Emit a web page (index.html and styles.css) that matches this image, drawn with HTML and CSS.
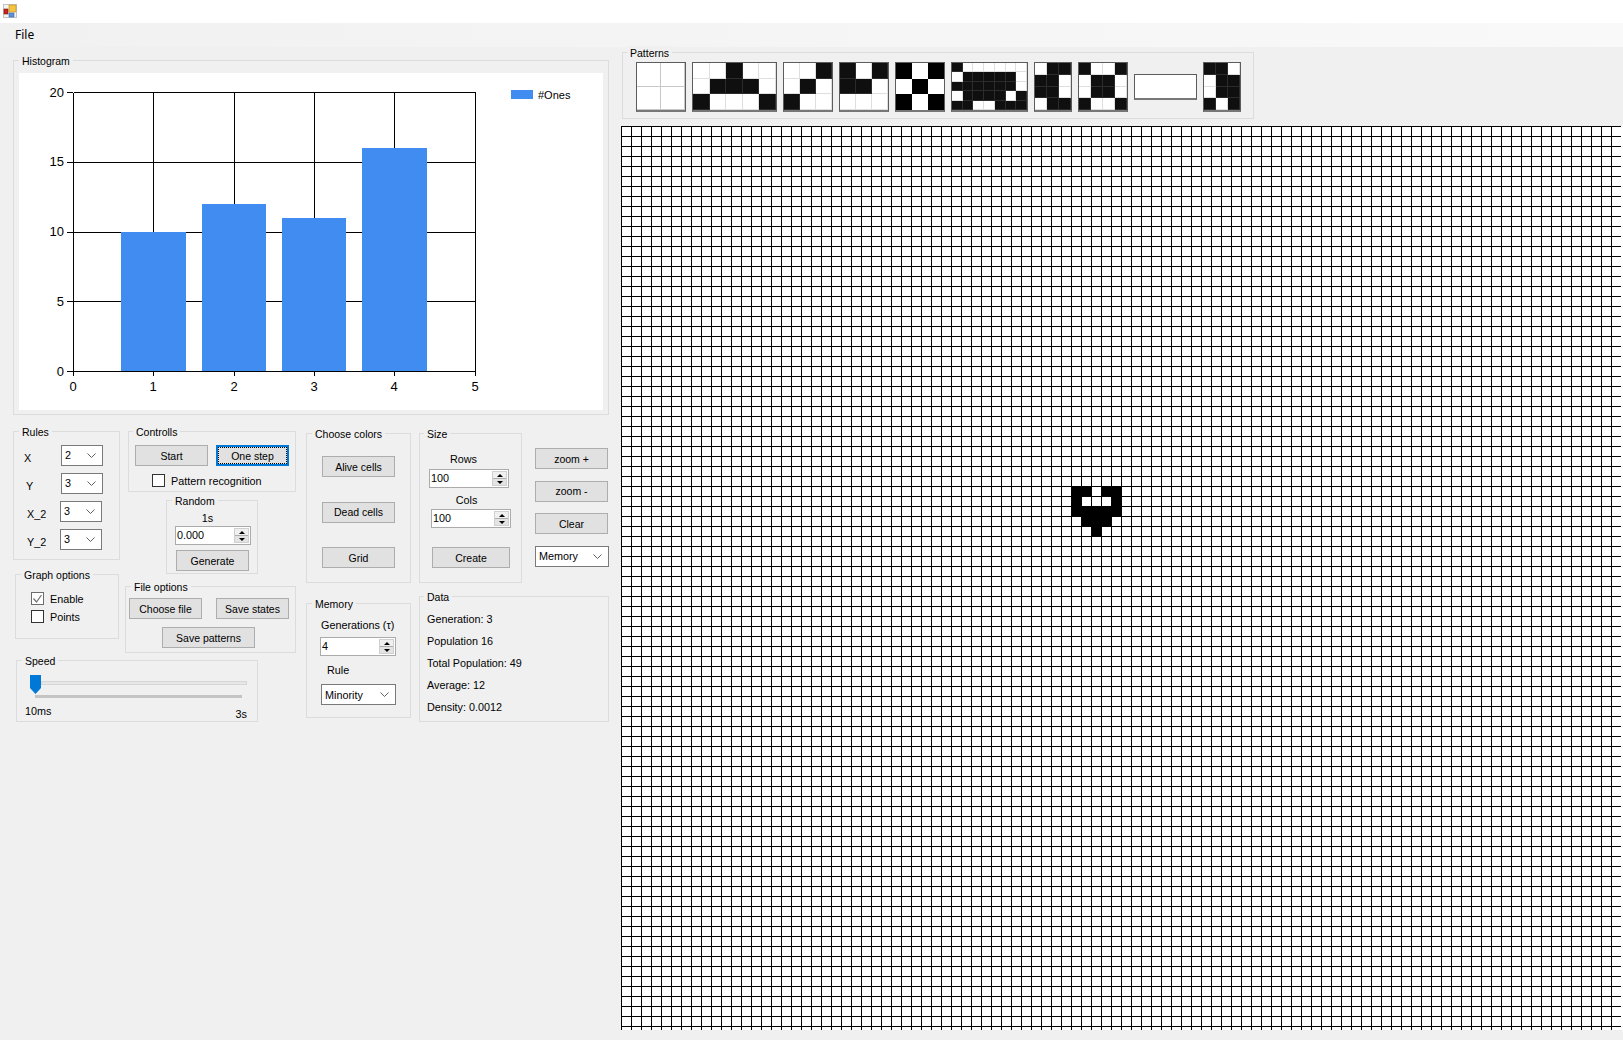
FILE: index.html
```html
<!DOCTYPE html>
<html lang="en">
<head>
<meta charset="utf-8">
<title>Game of Life</title>
<link rel="stylesheet" href="styles.css">
</head>
<body>
<header class="titlebar">
  <svg class="app-icon" width="14" height="14" viewBox="0 0 14 14">
    <rect x="0" y="0" width="14" height="14" fill="#c4c4c4"/>
    <rect x="1" y="1" width="12" height="12" fill="#f4f4f4"/>
    <rect x="6" y="1" width="7" height="7" fill="#f5c542" stroke="#b98a1a" stroke-width=".6"/>
    <rect x="1" y="5" width="4" height="5" fill="#c8231c" stroke="#7c1410" stroke-width=".6"/>
    <rect x="6" y="9" width="5" height="4" fill="#5d8fdc" stroke="#3c68ac" stroke-width=".6"/>
  </svg>
</header>
<nav class="menubar"><span class="menu-item">File</span></nav>

<main class="app">
  <section class="left">
    <div class="group histogram">
      <div class="legend">Histogram</div>
      <svg class="chart" width="584" height="337" viewBox="0 0 584 337">
        <g class="grid-lines">
          <path d="M54.5 19.5H456.5M54.5 89.5H456.5M54.5 159.5H456.5M54.5 228.5H456.5M54.5 298.5H456.5"/>
          <path d="M54.5 19.5V298.5M134.5 19.5V298.5M215.5 19.5V298.5M295.5 19.5V298.5M375.5 19.5V298.5M456.5 19.5V298.5"/>
          <path d="M48 19.5H54M48 89.5H54M48 159.5H54M48 228.5H54M48 298.5H54"/>
          <path d="M54.5 298V303M134.5 298V303M215.5 298V303M295.5 298V303M375.5 298V303M456.5 298V303"/>
        </g>
        <g class="bars">
          <rect x="102" y="159" width="65" height="139"/>
          <rect x="183" y="131" width="64" height="167"/>
          <rect x="263" y="145" width="64" height="153"/>
          <rect x="343" y="75" width="65" height="223"/>
          <rect x="492" y="17" width="22" height="9"/>
        </g>
        <g class="y-labels">
          <text x="45" y="24">20</text>
          <text x="45" y="93">15</text>
          <text x="45" y="163">10</text>
          <text x="45" y="233">5</text>
          <text x="45" y="303">0</text>
        </g>
        <g class="x-labels">
          <text x="54" y="318">0</text>
          <text x="134" y="318">1</text>
          <text x="215" y="318">2</text>
          <text x="295" y="318">3</text>
          <text x="375" y="318">4</text>
          <text x="456" y="318">5</text>
        </g>
        <text class="chart-legend" x="519" y="26">#Ones</text>
      </svg>
    </div>

    <div class="controls">
      <div class="col-ab">
        <div class="ab-row">
          <div class="col-a">
            <div class="group rules">
              <div class="legend">Rules</div>
              <div class="rule-list">
                <div class="rule-row"><span class="rule-label rl-x">X</span><div class="combo combo-small"><span>2</span><svg class="chev" width="9" height="5" viewBox="0 0 9 5"><path d="M.5.5l4 4 4-4"/></svg></div></div>
                <div class="rule-row"><span class="rule-label rl-y">Y</span><div class="combo combo-small"><span>3</span><svg class="chev" width="9" height="5" viewBox="0 0 9 5"><path d="M.5.5l4 4 4-4"/></svg></div></div>
                <div class="rule-row"><span class="rule-label rl-x2">X_2</span><div class="combo combo-small"><span>3</span><svg class="chev" width="9" height="5" viewBox="0 0 9 5"><path d="M.5.5l4 4 4-4"/></svg></div></div>
                <div class="rule-row"><span class="rule-label rl-x2">Y_2</span><div class="combo combo-small"><span>3</span><svg class="chev" width="9" height="5" viewBox="0 0 9 5"><path d="M.5.5l4 4 4-4"/></svg></div></div>
              </div>
            </div>
            <div class="group graph">
              <div class="legend">Graph options</div>
              <div class="check-list">
                <label class="check"><span class="box box-on"><svg width="11" height="11" viewBox="0 0 11 11"><path d="M1.5 5.5l3 3.5 5-7"/></svg></span>Enable</label>
                <label class="check"><span class="box"></span>Points</label>
              </div>
            </div>
          </div>
          <div class="col-b">
            <div class="group controlls">
              <div class="legend legend-tight">Controlls</div>
              <div class="btn-row btn-row-ctrl">
                <button class="btn">Start</button>
                <button class="btn btn-focus">One step</button>
              </div>
              <label class="check check-pattern"><span class="box"></span>Pattern recognition</label>
            </div>
            <div class="group random">
              <div class="legend">Random</div>
              <div class="random-time">1s</div>
              <div class="numeric numeric-random"><span class="num-value">0.000</span><span class="spin"><b class="up"></b><b class="down"></b></span></div>
              <button class="btn btn-generate">Generate</button>
            </div>
            <div class="group file">
              <div class="legend">File options</div>
              <div class="btn-row btn-row-file">
                <button class="btn">Choose file</button>
                <button class="btn">Save states</button>
              </div>
              <button class="btn btn-save">Save patterns</button>
            </div>
          </div>
        </div>
        <div class="group speed">
          <div class="legend">Speed</div>
          <div class="slider">
            <div class="slider-track"></div>
            <svg class="slider-thumb" width="11" height="19" viewBox="0 0 11 19"><path d="M0 0H11V13L5.5 19 0 13Z"/></svg>
          </div>
          <div class="slider-ticks"></div>
          <div class="slider-labels"><span>10ms</span><span class="label-3s">3s</span></div>
        </div>
      </div>

      <div class="col-c">
        <div class="group colors">
          <div class="legend">Choose colors</div>
          <div class="color-btns">
            <button class="btn">Alive cells</button>
            <button class="btn">Dead cells</button>
            <button class="btn">Grid</button>
          </div>
        </div>
        <div class="group memory">
          <div class="legend">Memory</div>
          <div class="mem-gen">Generations (τ)</div>
          <div class="numeric numeric-mem"><span class="num-value">4</span><span class="spin"><b class="up"></b><b class="down"></b></span></div>
          <div class="mem-rule">Rule</div>
          <div class="combo combo-rule"><span>Minority</span><svg class="chev" width="9" height="5" viewBox="0 0 9 5"><path d="M.5.5l4 4 4-4"/></svg></div>
        </div>
      </div>

      <div class="col-d">
        <div class="d-row">
          <div class="group size">
            <div class="legend legend-tight">Size</div>
            <div class="size-label size-rows">Rows</div>
            <div class="numeric numeric-rows"><span class="num-value">100</span><span class="spin"><b class="up"></b><b class="down"></b></span></div>
            <div class="size-label size-cols">Cols</div>
            <div class="numeric numeric-cols"><span class="num-value">100</span><span class="spin"><b class="up"></b><b class="down"></b></span></div>
            <button class="btn btn-create">Create</button>
          </div>
          <div class="side-btns">
            <button class="btn">zoom +</button>
            <button class="btn">zoom -</button>
            <button class="btn">Clear</button>
            <div class="combo combo-memory"><span>Memory</span><svg class="chev" width="9" height="5" viewBox="0 0 9 5"><path d="M.5.5l4 4 4-4"/></svg></div>
          </div>
        </div>
        <div class="group data">
          <div class="legend legend-tight">Data</div>
          <ul class="data-list">
            <li>Generation: 3</li>
            <li>Population 16</li>
            <li>Total Population: 49</li>
            <li>Average: 12</li>
            <li>Density: 0.0012</li>
          </ul>
        </div>
      </div>
    </div>
  </section>

  <section class="right">
    <div class="group patterns">
      <div class="legend legend-tight">Patterns</div>
      <div class="tiles">
        <div class="tile t1 c2"><i></i><i></i><i></i><i></i></div>
        <div class="tile t2 c5"><i></i><i></i><i class="k"></i><i></i><i></i><i></i><i class="k"></i><i class="k"></i><i class="k"></i><i></i><i class="k"></i><i></i><i></i><i></i><i class="k"></i></div>
        <div class="tile t3 c3"><i></i><i></i><i class="k"></i><i></i><i class="k"></i><i></i><i class="k"></i><i></i><i></i></div>
        <div class="tile t3 c3"><i class="k"></i><i></i><i class="k"></i><i class="k"></i><i class="k"></i><i></i><i></i><i></i><i></i></div>
        <div class="tile t3 c3 pure"><i class="k"></i><i></i><i class="k"></i><i></i><i class="k"></i><i></i><i class="k"></i><i></i><i class="k"></i></div>
        <div class="tile t6 c7"><i class="k"></i><i></i><i></i><i></i><i></i><i></i><i></i><i></i><i class="k"></i><i class="k"></i><i class="k"></i><i class="k"></i><i class="k"></i><i></i><i class="k"></i><i class="k"></i><i class="k"></i><i class="k"></i><i class="k"></i><i class="k"></i><i></i><i></i><i class="k"></i><i class="k"></i><i class="k"></i><i class="k"></i><i></i><i class="k"></i><i class="k"></i><i class="k"></i><i></i><i></i><i class="k"></i><i class="k"></i><i class="k"></i></div>
        <div class="tile t7 c3"><i></i><i class="k"></i><i class="k"></i><i class="k"></i><i class="k"></i><i></i><i class="k"></i><i class="k"></i><i></i><i></i><i class="k"></i><i class="k"></i></div>
        <div class="tile t3 c4"><i class="k"></i><i></i><i></i><i class="k"></i><i></i><i class="k"></i><i class="k"></i><i></i><i></i><i class="k"></i><i class="k"></i><i></i><i class="k"></i><i></i><i></i><i class="k"></i></div>
        <div class="tile t9"></div>
        <div class="tile t7 c3"><i class="k"></i><i class="k"></i><i></i><i></i><i class="k"></i><i class="k"></i><i></i><i class="k"></i><i class="k"></i><i class="k"></i><i></i><i class="k"></i></div>
      </div>
    </div>
    <div class="board">
      <svg class="board-svg" width="1000" height="904" viewBox="0 0 1000 904">
        <defs>
          <pattern id="cell" width="10" height="10" patternUnits="userSpaceOnUse">
            <rect width="10" height="1"/>
            <rect width="1" height="10"/>
          </pattern>
        </defs>
        <rect width="1000" height="904" fill="url(#cell)"/>
        <rect x="450" y="360" width="21" height="10"/>
        <rect x="480" y="360" width="21" height="10"/>
        <rect x="450" y="370" width="11" height="10"/>
        <rect x="490" y="370" width="11" height="10"/>
        <rect x="450" y="380" width="51" height="10"/>
        <rect x="460" y="390" width="31" height="10"/>
        <rect x="470" y="400" width="11" height="11"/>
      </svg>
    </div>
  </section>
</main>
</body>
</html>
```

FILE: styles.css
```css
* { box-sizing: border-box; }
html, body { margin: 0; height: 100%; }
body {
  width: 1623px;
  height: 1040px;
  overflow: hidden;
  background: #f0f0f0;
  color: #000;
  font-family: "Liberation Sans", Arial, sans-serif;
  font-size: 10.8px;
  line-height: 14px;
}

/* window chrome */
.titlebar { height: 23px; background: #fff; padding: 4px 0 0 3px; }
.app-icon { display: block; }
.menubar {
  height: 24px;
  padding: 4px 0 0 15px;
  background: linear-gradient(90deg, #f1f1f1, #f9f9f9);
  font-family: "Noto Sans", sans-serif;
  font-size: 12px;
  line-height: 16px;
}

.app { display: flex; height: 993px; }
.left { width: 621px; flex: none; padding: 13px 0 0 13px; }
.right { flex: 1; min-width: 0; padding-top: 5px; }

/* group boxes */
.group { border: 1px solid #dcdcdc; }
.legend {
  display: table;
  height: 14px;
  margin: -7px 0 0 5px;
  padding: 0 3px;
  background: #f0f0f0;
  font-size: 10.5px;
  white-space: nowrap;
}
.legend-tight { margin-left: 4px; }

/* buttons */
.btn {
  display: block;
  width: 73px;
  height: 21px;
  padding: 0;
  border: 1px solid #adadad;
  border-radius: 0;
  background: #e1e1e1;
  color: #000;
  font: inherit;
  font-size: 10.5px;
  text-align: center;
}
.btn-focus { border: 2px solid #0078d7; outline: 1px dotted #000; outline-offset: -3px; }

/* combos */
.combo {
  display: flex;
  align-items: center;
  justify-content: space-between;
  height: 21px;
  padding: 0 6px 0 3px;
  border: 1px solid #7a7a7a;
  background: #fff;
}
.chev { display: block; fill: none; stroke: #606060; stroke-width: 1; }
.combo-small { width: 42px; }
.combo-small span { padding-bottom: 2px; }
.combo-memory { width: 74px; }
.combo-rule { width: 75px; margin: 7px 0 0 14px; }

/* numeric up-down */
.numeric {
  display: flex;
  justify-content: space-between;
  height: 19px;
  width: 76px;
  border: 1px solid #ababab;
  background: #fff;
}
.num-value { padding: 1px 0 0 1px; }
.spin {
  display: flex;
  flex-direction: column;
  width: 15px;
  margin: 1px;
  border: 1px solid #d0d0d0;
}
.spin b {
  flex: 1;
  display: flex;
  align-items: center;
  justify-content: center;
}
.spin .up { background: #f0f0f0; border-bottom: 1px solid #adadad; }
.spin .down { background: #e3e3e3; }
.spin b::after {
  content: "";
  border-left: 3px solid transparent;
  border-right: 3px solid transparent;
}
.spin .up::after { border-bottom: 3px solid #000; }
.spin .down::after { border-top: 3px solid #000; }

/* checkboxes */
.check { display: flex; align-items: center; height: 13px; }
.box {
  flex: none;
  width: 13px;
  height: 13px;
  margin-right: 6px;
  border: 1px solid #333;
  background: #fff;
}
.box svg { display: block; fill: none; stroke: #707070; stroke-width: 1.2; }
.box-on { border-color: #6d6d6d; }

/* histogram */
.histogram { width: 596px; height: 355px; }
.chart { display: block; margin: 5px 0 0 5px; background: #fff; }
.grid-lines path { fill: none; stroke: #000; stroke-width: 1; shape-rendering: crispEdges; }
.bars rect { fill: #418cf0; shape-rendering: crispEdges; }
.y-labels text, .x-labels text { font-size: 13px; }
.y-labels { text-anchor: end; }
.x-labels { text-anchor: middle; }
.chart-legend { font-size: 11px; }

/* lower control area */
.controls { display: flex; margin-top: 16px; }
.col-ab { width: 283px; flex: none; }
.ab-row { display: flex; }
.col-a { width: 107px; flex: none; }
.col-b { margin-left: 8px; }
.col-c { width: 105px; flex: none; margin: 2px 0 0 10px; }
.col-d { width: 190px; flex: none; margin: 2px 0 0 8px; }
.d-row { display: flex; }

.rules { width: 107px; height: 129px; }
.rule-list { display: flex; flex-direction: column; gap: 7px; margin-top: 6px; }
.rule-row { display: flex; }
.rule-label { padding-top: 6px; }
.rl-x { width: 37px; margin-left: 10px; }
.rl-y { width: 35px; margin-left: 12px; }
.rl-x2 { width: 33px; margin-left: 13px; }

.graph { width: 104px; height: 65px; margin: 14px 0 0 2px; }
.check-list { display: flex; flex-direction: column; gap: 5px; margin: 10px 0 0 15px; }

.controlls { width: 168px; height: 61px; }
.btn-row { display: flex; }
.btn-row-ctrl { gap: 8px; margin: 6px 0 0 6px; }
.check-pattern { margin: 8px 0 0 23px; }

.random { width: 92px; height: 74px; margin: 8px 0 0 38px; }
.random-time { width: 81px; margin-top: 3px; text-align: center; }
.numeric-random { margin: 1px 0 0 8px; }
.btn-generate { margin: 5px 0 0 9px; }

.file { width: 171px; height: 67px; margin: 12px 0 0 -3px; }
.btn-row-file { gap: 14px; margin: 4px 0 0 3px; }
.btn-save { width: 93px; margin: 8px 0 0 36px; }

.speed { width: 242px; height: 62px; margin: 7px 0 0 3px; }
.slider { position: relative; height: 19px; margin: 7px 0 0 13px; }
.slider-track {
  position: absolute;
  left: 11px;
  top: 6px;
  width: 206px;
  height: 4px;
  border: 1px solid #d6d6d6;
  background: #e7e7e7;
}
.slider-thumb { position: absolute; left: 0; top: 0; fill: #0078d7; }
.slider-ticks { width: 207px; height: 3px; margin: 1px 0 0 18px; background: #c4c4c4; }
.slider-labels { display: flex; justify-content: space-between; margin-top: 6px; padding: 0 10px 0 8px; }
.label-3s { padding-top: 3px; }

.colors { height: 150px; }
.color-btns { display: flex; flex-direction: column; gap: 24.5px; margin: 15px 0 0 15px; }

.memory { height: 115px; margin-top: 20px; }
.mem-gen { margin: 7px 0 0 14px; }
.numeric-mem { margin: 5px 0 0 13px; }
.mem-rule { margin: 7px 0 0 20px; }

.size { width: 103px; height: 150px; flex: none; }
.size-label { width: 87px; text-align: center; }
.size-rows { margin-top: 11px; }
.numeric-rows { width: 80px; margin: 3px 0 0 9px; }
.size-cols { margin: 5px 0 0 3px; }
.numeric-cols { width: 80px; margin: 2px 0 0 11px; }
.btn-create { width: 78px; margin: 19px 0 0 12px; }

.side-btns { display: flex; flex-direction: column; gap: 11.6px; margin: 15px 0 0 13px; }

.data { width: 190px; height: 126px; margin-top: 13px; }
.data-list { display: flex; flex-direction: column; gap: 8px; margin: 8px 0 0 7px; padding: 0; list-style: none; }

/* patterns strip */
.patterns { width: 632px; height: 67px; margin-left: 1px; }
.tiles { display: flex; align-items: center; gap: 6px; height: 50px; margin: 2px 0 0 13px; }
.tile {
  display: grid;
  grid-auto-rows: 1fr;
  flex: none;
  height: 50px;
  border: 1px solid #5c5c5c;
  border-bottom: 2px solid #777;
  background: #fff;
}
.c2 { grid-template-columns: repeat(2, 1fr); }
.c3 { grid-template-columns: repeat(3, 1fr); }
.c4 { grid-template-columns: repeat(4, 1fr); }
.c5 { grid-template-columns: repeat(5, 1fr); }
.c7 { grid-template-columns: repeat(7, 1fr); }
.tile i {
  display: block;
  border-right: 1px solid rgba(128, 128, 128, .25);
  border-bottom: 1px solid rgba(128, 128, 128, .25);
}
.tile i.k { background: #0f0f0f; }
.t1 { width: 50px; }
.t1 i { border-color: #c8c8c8; }
.t2 { width: 85px; }
.t3 { width: 50px; }
.t6 { width: 77px; }
.t7 { width: 38px; }
.t9 { width: 63px; height: 26px; }
.pure i { border-color: transparent; }
.pure i.k { background: #000; }

/* life board */
.board { height: 904px; margin-top: 7px; background: #fff; }
.board-svg { display: block; shape-rendering: crispEdges; }
```
